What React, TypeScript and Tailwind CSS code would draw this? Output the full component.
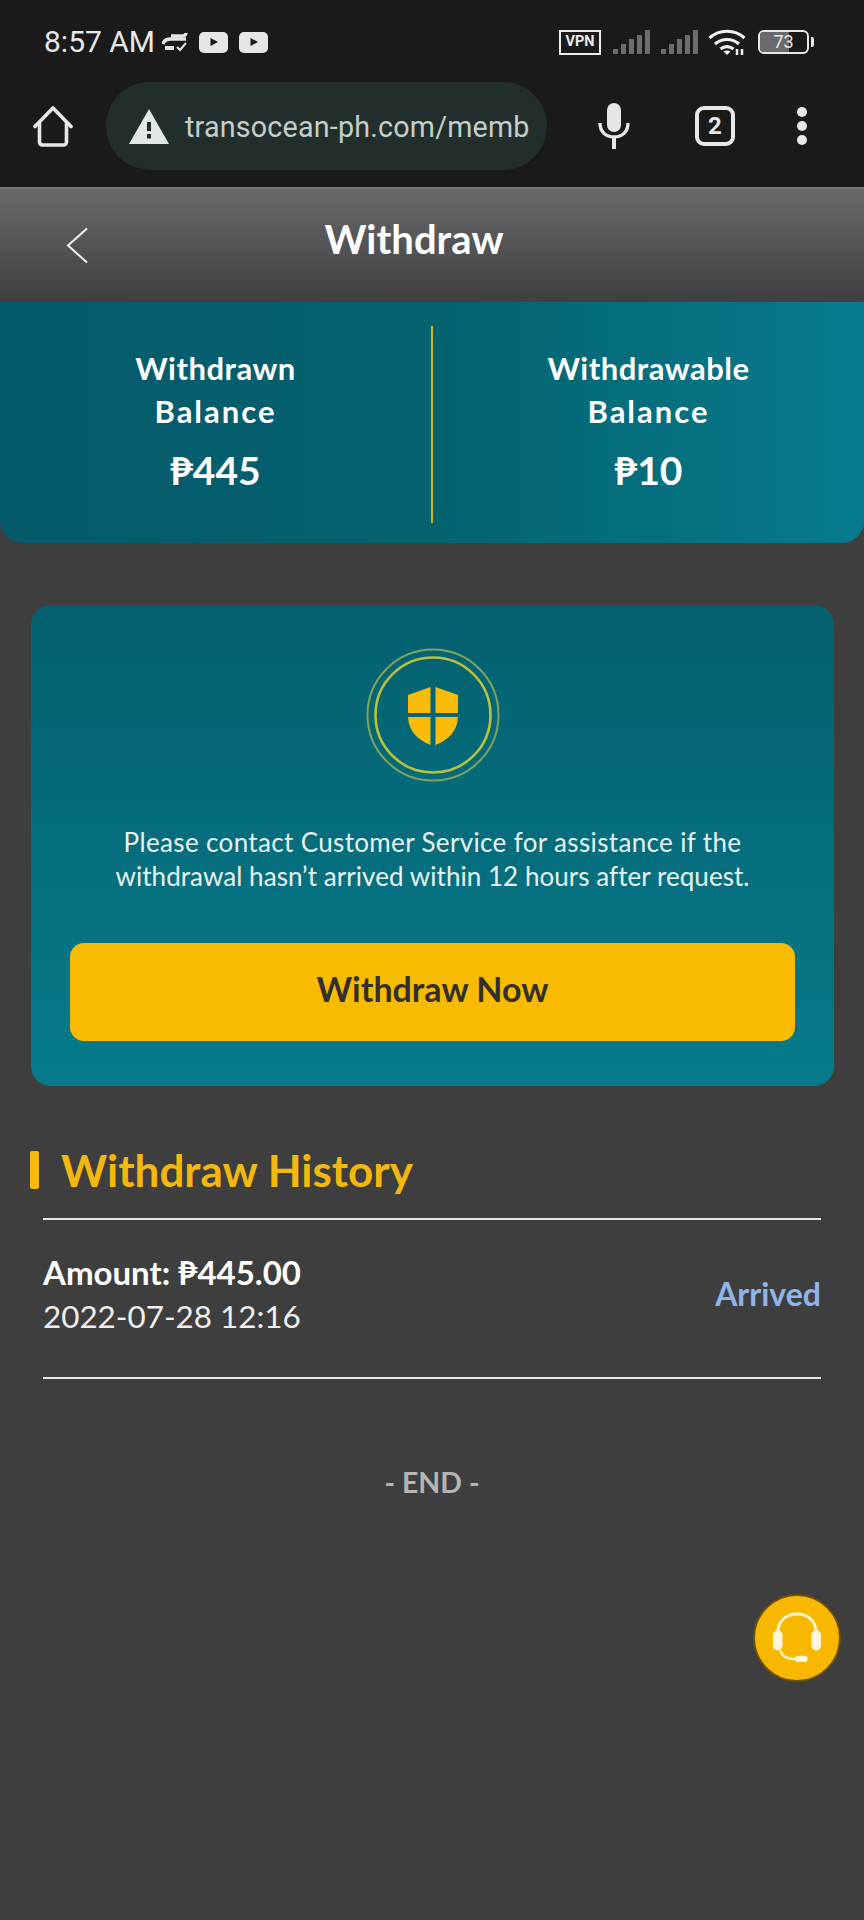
import React from "react";

const gothic = "font-['Lato','Noto_Sans',sans-serif]";

function SignalBars() {
  return (
    <svg width="38" height="25" viewBox="0 0 38 25" fill="#6d6d6d">
      <rect x="0" y="19" width="5" height="5" />
      <rect x="8" y="14" width="5" height="10" />
      <rect x="16" y="9" width="5" height="15" />
      <rect x="24" y="5" width="5" height="19" />
      <rect x="32" y="0" width="5" height="24" />
    </svg>
  );
}

function PlayBadge() {
  return (
    <div className="flex h-[21px] w-[29px] items-center justify-center rounded-[5px] bg-[#e6e6e6]">
      <svg width="10" height="10" viewBox="0 0 10 10">
        <path d="M1.5 1v8l7.5-4z" fill="#1a1a1a" />
      </svg>
    </div>
  );
}

function StatusBar() {
  return (
    <div className="flex h-[82px] items-start justify-between pl-[44px] pr-[50px] pt-[26px]">
      <div className="flex items-center">
        <span className="font-['Roboto',sans-serif] text-[30px] leading-[32px] text-[#e8e8e8]">8:57 AM</span>
        <svg className="ml-[7px]" width="27" height="22" viewBox="0 0 27 22" fill="none" stroke="#e6e6e6" strokeWidth="3.4">
          <path d="M9 5h11c2 0 4-1 4-3" />
          <path d="M1 13c1-4 4-5 8-5h15" />
          <path d="M3 17h9" strokeWidth="4" />
          <path d="M15 16l3 3 6-7" strokeWidth="2" />
        </svg>
        <div className="ml-[10px] flex gap-[11px]">
          <PlayBadge />
          <PlayBadge />
        </div>
      </div>
      <div className="flex items-center pt-[3px]">
        <div className="flex h-[25px] w-[42px] items-center justify-center border-2 border-[#ececec] font-['Roboto',sans-serif] text-[14.5px] font-bold text-[#ececec]">
          VPN
        </div>
        <div className="ml-[12px] flex gap-[10px]">
          <SignalBars />
          <SignalBars />
        </div>
        <svg className="ml-[9px]" width="38" height="26" viewBox="0 0 38 26" fill="none" stroke="#efefef" strokeWidth="3.2">
          <path d="M1.5 9c10-9 25-9 35 0" />
          <path d="M7 15c7-6 17-6 24 0" />
          <path d="M12.5 20c4-3 9-3 13 0" />
          <path d="M19 26l-3.5-3.5c2-1.5 5-1.5 7 0z" fill="#efefef" stroke="none" />
          <path d="M29 26v-6M34 26v-6" strokeWidth="2.5" />
        </svg>
        <div className="relative ml-[12px] h-[24px] w-[51px] overflow-hidden rounded-[6px] border-2 border-[#e8e8e8]">
          <div className="h-full w-[29px] bg-[#6a6a6a]" />
          <span className="absolute inset-0 flex items-center justify-center font-['Roboto',sans-serif] text-[18px] leading-none text-[#e8e8e8]">
            73
          </span>
        </div>
        <div className="ml-[2px] h-[10px] w-[3px] rounded-r-[2px] bg-[#e8e8e8]" />
      </div>
    </div>
  );
}

function Toolbar() {
  return (
    <div className="flex h-[105px] items-start pl-[33px]">
      <svg className="mt-[24px]" width="40" height="41" viewBox="0 0 40 41" fill="none" stroke="#e8e8e8" strokeWidth="3.6" strokeLinejoin="round" strokeLinecap="round">
        <path d="M2 20.5 20 2l18 18.5" />
        <path d="M6.5 17v19a3 3 0 0 0 3 3h21a3 3 0 0 0 3-3V17" />
      </svg>
      <div className="ml-[33px] flex h-[88px] w-[441px] items-center rounded-full bg-[#222e2b] pl-[23px]">
        <svg width="40" height="35" viewBox="0 0 40 35">
          <path d="M20 0l20 35H0z" fill="#e4e8e6" />
          <rect x="18" y="13" width="4" height="9" fill="#222e2b" />
          <rect x="18" y="25" width="4" height="4.5" fill="#222e2b" />
        </svg>
        <span className="ml-[16px] pt-[3px] font-['Roboto',sans-serif] text-[28.7px] leading-none tracking-[0.2px] text-[#c3cfca]">
          transocean-ph.com/memb
        </span>
      </div>
      <svg className="ml-[51px] mt-[21px]" width="32" height="46" viewBox="0 0 32 46" fill="none">
        <rect x="9" y="0" width="14" height="29" rx="7" fill="#e6e6e6" />
        <path d="M2 20c0 9 6 14 14 14s14-5 14-14" stroke="#e6e6e6" strokeWidth="3.4" />
        <path d="M16 34v12" stroke="#e6e6e6" strokeWidth="4" />
      </svg>
      <div className="ml-[65px] mt-[24px] flex h-[40px] w-[40px] items-center justify-center rounded-[9px] border-[4px] border-[#e8e8e8] font-['Roboto',sans-serif] text-[24px] font-bold text-[#e8e8e8]">
        2
      </div>
      <div className="ml-[62px] mt-[25px] flex flex-col gap-[4px]">
        <div className="h-[10px] w-[10px] rounded-full bg-[#e8e8e8]" />
        <div className="h-[10px] w-[10px] rounded-full bg-[#e8e8e8]" />
        <div className="h-[10px] w-[10px] rounded-full bg-[#e8e8e8]" />
      </div>
    </div>
  );
}

function PageHeader() {
  return (
    <div className="relative flex h-[115px] items-center justify-center border-t-2 border-[#737376] bg-gradient-to-b from-[#69696d] to-[#3f3f40] pb-[14px] pr-[36px]">
      <svg className="absolute left-[65px] top-[38px]" width="24" height="37" viewBox="0 0 24 37" fill="none" stroke="#f2f2f2" strokeWidth="2">
        <path d="M22 1.5 3 18.5l19 17" />
      </svg>
      <span className={`${gothic} text-[40px] font-bold leading-none text-white`}>Withdraw</span>
    </div>
  );
}

function BalanceColumn({ label, second, value }: { label: string; second: string; value: string }) {
  return (
    <div className="flex flex-1 flex-col items-center pt-[45px] text-white">
      <p className={`${gothic} text-[31px] font-bold leading-[43px] tracking-[0.5px]`}>{label}</p>
      <p className={`${gothic} text-[31px] font-bold leading-[43px] tracking-[2px]`}>{second}</p>
      <p className={`${gothic} mt-[14px] text-[39px] font-bold leading-[47px]`}>{value}</p>
    </div>
  );
}

function BalanceStrip() {
  return (
    <div className="flex h-[241px] rounded-b-[22px] bg-gradient-to-r from-[#04596a] via-[#04626f] to-[#067b8d]">
      <BalanceColumn label="Withdrawn" second="Balance" value="₱445" />
      <div className="mt-[24px] h-[197px] w-[2px] bg-[#c5b93a]" />
      <BalanceColumn label="Withdrawable" second="Balance" value="₱10" />
    </div>
  );
}

function ShieldBadge() {
  return (
    <svg width="134" height="134" viewBox="0 0 134 134" fill="none">
      <circle cx="67" cy="67" r="65.5" stroke="#7fa45d" strokeWidth="2" />
      <circle cx="67" cy="67" r="57.5" stroke="#b8c23f" strokeWidth="2.6" />
      <path d="M64.5 39 42 47v18h22.5z" fill="#fabb0a" />
      <path d="M69.5 39 92 47v18H69.5z" fill="#fabb0a" />
      <path d="M42 69h22.5v28C52 92 42.5 83 42 69z" fill="#fabb0a" />
      <path d="M92 69H69.5v28C82 92 91.5 83 92 69z" fill="#fabb0a" />
    </svg>
  );
}

function WithdrawCard() {
  return (
    <div className="ml-[31px] mr-[30px] mt-[62px] flex h-[481px] flex-col items-center rounded-[20px] bg-gradient-to-b from-[#04606f] to-[#067b8b] px-[39px] pt-[43px]">
      <ShieldBadge />
      <p className={`${gothic} mt-[43px] whitespace-nowrap text-center text-[26px] leading-[34px] text-[#e8f2f3]`}>
        <span className="tracking-[0.35px]">Please contact Customer Service for assistance if the</span>
        <br />
        <span className="tracking-[0.05px]">withdrawal hasn’t arrived within 12 hours after request.</span>
      </p>
      <button className={`${gothic} mt-[50px] h-[98px] w-full rounded-[14px] bg-[#f8bb00] pb-[8px] text-[34px] font-bold text-[#33302a]`}>
        Withdraw Now
      </button>
    </div>
  );
}

function History() {
  return (
    <div>
      <div className="ml-[30px] mt-[59px] flex items-center">
        <div className="h-[38px] w-[9px] rounded-[2px] bg-[#f5bb0a]" />
        <h2 className={`${gothic} ml-[22px] text-[44px] font-bold leading-[50px] text-[#f3b80f]`}>Withdraw History</h2>
      </div>
      <div className="mx-[43px] mt-[23px] flex h-[161px] items-center justify-between border-y-2 border-[#e6e6e6] pb-[10px]">
        <div className="text-white">
          <p className={`${gothic} text-[33px] font-bold leading-[44px]`}>Amount: ₱445.00</p>
          <p className={`${gothic} text-[31.4px] leading-[44px] text-[#efefef]`}>2022-07-28 12:16</p>
        </div>
        <span className={`${gothic} text-[32px] font-bold text-[#8fb5ea]`}>Arrived</span>
      </div>
      <p className={`${gothic} mt-[85px] text-center text-[28.5px] font-bold leading-[36px] text-[#b5b5b5]`}>- END -</p>
    </div>
  );
}

function SupportButton() {
  return (
    <div className="absolute left-[753px] top-[1594px] flex h-[88px] w-[88px] items-center justify-center rounded-full border-2 border-[#6b5206] bg-[#f8b800]">
      <svg width="50" height="52" viewBox="0 0 52 54" fill="none">
        <path d="M6 27V22C6 10 14 2 26 2s20 8 20 20v5" stroke="#fff3d0" strokeWidth="3" />
        <rect x="1" y="19" width="10" height="21" rx="5" fill="#fff6dc" />
        <rect x="41" y="19" width="10" height="21" rx="5" fill="#fff6dc" />
        <path d="M9 40c1 6 7 9 17 9" stroke="#fff3d0" strokeWidth="2.5" />
        <rect x="24" y="45.5" width="13" height="6.5" rx="3.2" fill="#fff6dc" />
      </svg>
    </div>
  );
}

export default function App() {
  return (
    <div className="relative h-[1920px] w-[864px] overflow-hidden bg-[#3e3e3e]">
      <div className="bg-[#1a1a1a]">
        <StatusBar />
        <Toolbar />
      </div>
      <PageHeader />
      <BalanceStrip />
      <WithdrawCard />
      <History />
      <SupportButton />
    </div>
  );
}
